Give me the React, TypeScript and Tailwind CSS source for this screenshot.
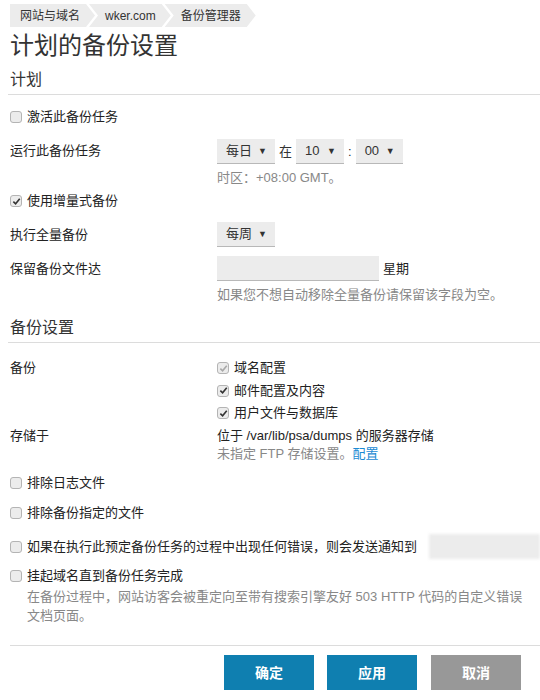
import type { ReactNode } from "react";

const font = "font-['Liberation_Sans','Noto_Sans_CJK_SC',sans-serif]";

function Crumbs() {
  const items = ["网站与域名", "wker.com", "备份管理器"];
  return (
    <div className="flex h-[23px] pl-[10px]">
      {items.map((t, i) => (
        <span
          key={t}
          className={`flex h-[23px] items-center bg-[#ececec] pr-[15px] text-[12px] leading-[18px] text-[#333] ${
            i === 0
              ? "pl-[10px] [clip-path:polygon(0_0,calc(100%-9px)_0,100%_50%,calc(100%-9px)_100%,0_100%)]"
              : "-ml-[6px] pl-[16px] [clip-path:polygon(0_0,calc(100%-9px)_0,100%_50%,calc(100%-9px)_100%,0_100%,9px_50%)]"
          }`}
        >
          {t}
        </span>
      ))}
    </div>
  );
}

function Box({ checked, disabled }: { checked?: boolean; disabled?: boolean }) {
  return (
    <span className="flex h-[12px] w-[12px] shrink-0 items-center justify-center rounded-[3px] border border-[#b4b4b4] bg-[#ececec]">
      {checked && (
        <svg viewBox="0 0 10 10" className="h-[9px] w-[9px]">
          <path
            d="M1.5 5.2 L4 7.6 L8.6 2"
            fill="none"
            stroke={disabled ? "#a9a9a9" : "#333"}
            strokeWidth="1.8"
          />
        </svg>
      )}
    </span>
  );
}

function Check({ label, checked, disabled }: { label: string; checked?: boolean; disabled?: boolean }) {
  return (
    <label className="flex items-center gap-[5px] text-[13px] leading-[18px] text-[#222]">
      <Box checked={checked} disabled={disabled} />
      <span>{label}</span>
    </label>
  );
}

function Select({ value, w }: { value: string; w: number }) {
  return (
    <span
      className="flex h-[25px] items-center justify-between border-b border-[#b8b8b8] bg-[#ececec] pl-[9px] pr-[8px] text-[13px] text-[#333]"
      style={{ width: w }}
    >
      <span>{value}</span>
      <span className="text-[9px]">▼</span>
    </span>
  );
}

function Row({ label, children, className = "" }: { label: string; children: ReactNode; className?: string }) {
  return (
    <div className={`flex ${className}`}>
      <div className="w-[207px] shrink-0 text-[13px] leading-[18px] text-[#222]">{label}</div>
      <div className="flex-1">{children}</div>
    </div>
  );
}

function Section({ title }: { title: string }) {
  return (
    <div className="-ml-[2px] border-b border-[#dcdcdc] pb-[4px] pl-[2px] text-[16px] leading-[20px] text-[#333]">
      {title}
    </div>
  );
}

export default function App() {
  return (
    <div className={`h-[700px] w-[540px] overflow-hidden bg-white pt-[4px] ${font}`}>
      <Crumbs />
      <div className="pl-[10px] text-[13px] leading-[18px]">
        <h1 className="mt-[2px] text-[24px] leading-[34px] text-[#333]">计划的备份设置</h1>

        <div className="mt-[7px]">
          <Section title="计划" />
        </div>

        <div className="mt-[13px]">
          <Check label="激活此备份任务" />
        </div>

        <Row label="运行此备份任务" className="mt-[16px] items-start">
          <div className="-mt-[3px] flex items-center text-[#333]">
            <Select value="每日" w={58} />
            <span className="mx-[4px]">在</span>
            <Select value="10" w={48} />
            <span className="mx-[4px]">:</span>
            <Select value="00" w={47} />
          </div>
          <div className="mt-[5px] text-[#888]">时区：+08:00 GMT。</div>
        </Row>

        <div className="mt-[5px]">
          <Check label="使用增量式备份" checked />
        </div>

        <Row label="执行全量备份" className="mt-[12px] items-center">
          <Select value="每周" w={58} />
        </Row>

        <Row label="保留备份文件达" className="mt-[13px] items-start">
          <div className="-mt-[4px] flex items-center gap-[4px] text-[#222]">
            <span className="h-[25px] w-[162px] border-b border-[#b8b8b8] bg-[#ececec]" />
            <span>星期</span>
          </div>
          <div className="mt-[5px] text-[#888]">如果您不想自动移除全量备份请保留该字段为空。</div>
        </Row>

        <div className="mt-[14px]">
          <Section title="备份设置" />
        </div>

        <Row label="备份" className="mt-[16px]">
          <div className="flex flex-col gap-[4.5px]">
            <Check label="域名配置" checked disabled />
            <Check label="邮件配置及内容" checked />
            <Check label="用户文件与数据库" checked />
          </div>
        </Row>

        <Row label="存储于" className="mt-[5px]">
          <div className="text-[#222]">位于 /var/lib/psa/dumps 的服务器存储</div>
          <div className="text-[#888]">
            未指定 FTP 存储设置。<span className="text-[#1a8ad3]">配置</span>
          </div>
        </Row>

        <div className="mt-[11px]">
          <Check label="排除日志文件" />
        </div>
        <div className="mt-[12px]">
          <Check label="排除备份指定的文件" />
        </div>
        <div className="mt-[12px] flex h-[25px] items-center">
          <Check label="如果在执行此预定备份任务的过程中出现任何错误，则会发送通知到" />
          <span className="ml-[12px] h-[25px] flex-1 bg-[#ececec] blur-[1.5px]" />
        </div>
        <div className="mt-[8px]">
          <Check label="挂起域名直到备份任务完成" />
        </div>
        <p className="mt-[2px] pl-[17px] pr-[16px] leading-[19px] text-[#888]">
          在备份过程中，网站访客会被重定向至带有搜索引擎友好 503 HTTP 代码的自定义错误文档页面。
        </p>

        <div className="mt-[20px] border-t border-[#dcdcdc]" />
        <div className="mt-[9px] flex pl-[214px] text-[14px] font-bold text-white">
          <span className="flex h-[35px] w-[90px] items-center justify-center bg-[#0f7fb0]">确定</span>
          <span className="ml-[13px] flex h-[35px] w-[90px] items-center justify-center bg-[#0f7fb0]">应用</span>
          <span className="ml-[14px] flex h-[35px] w-[90px] items-center justify-center bg-[#989898]">取消</span>
        </div>
      </div>
    </div>
  );
}
